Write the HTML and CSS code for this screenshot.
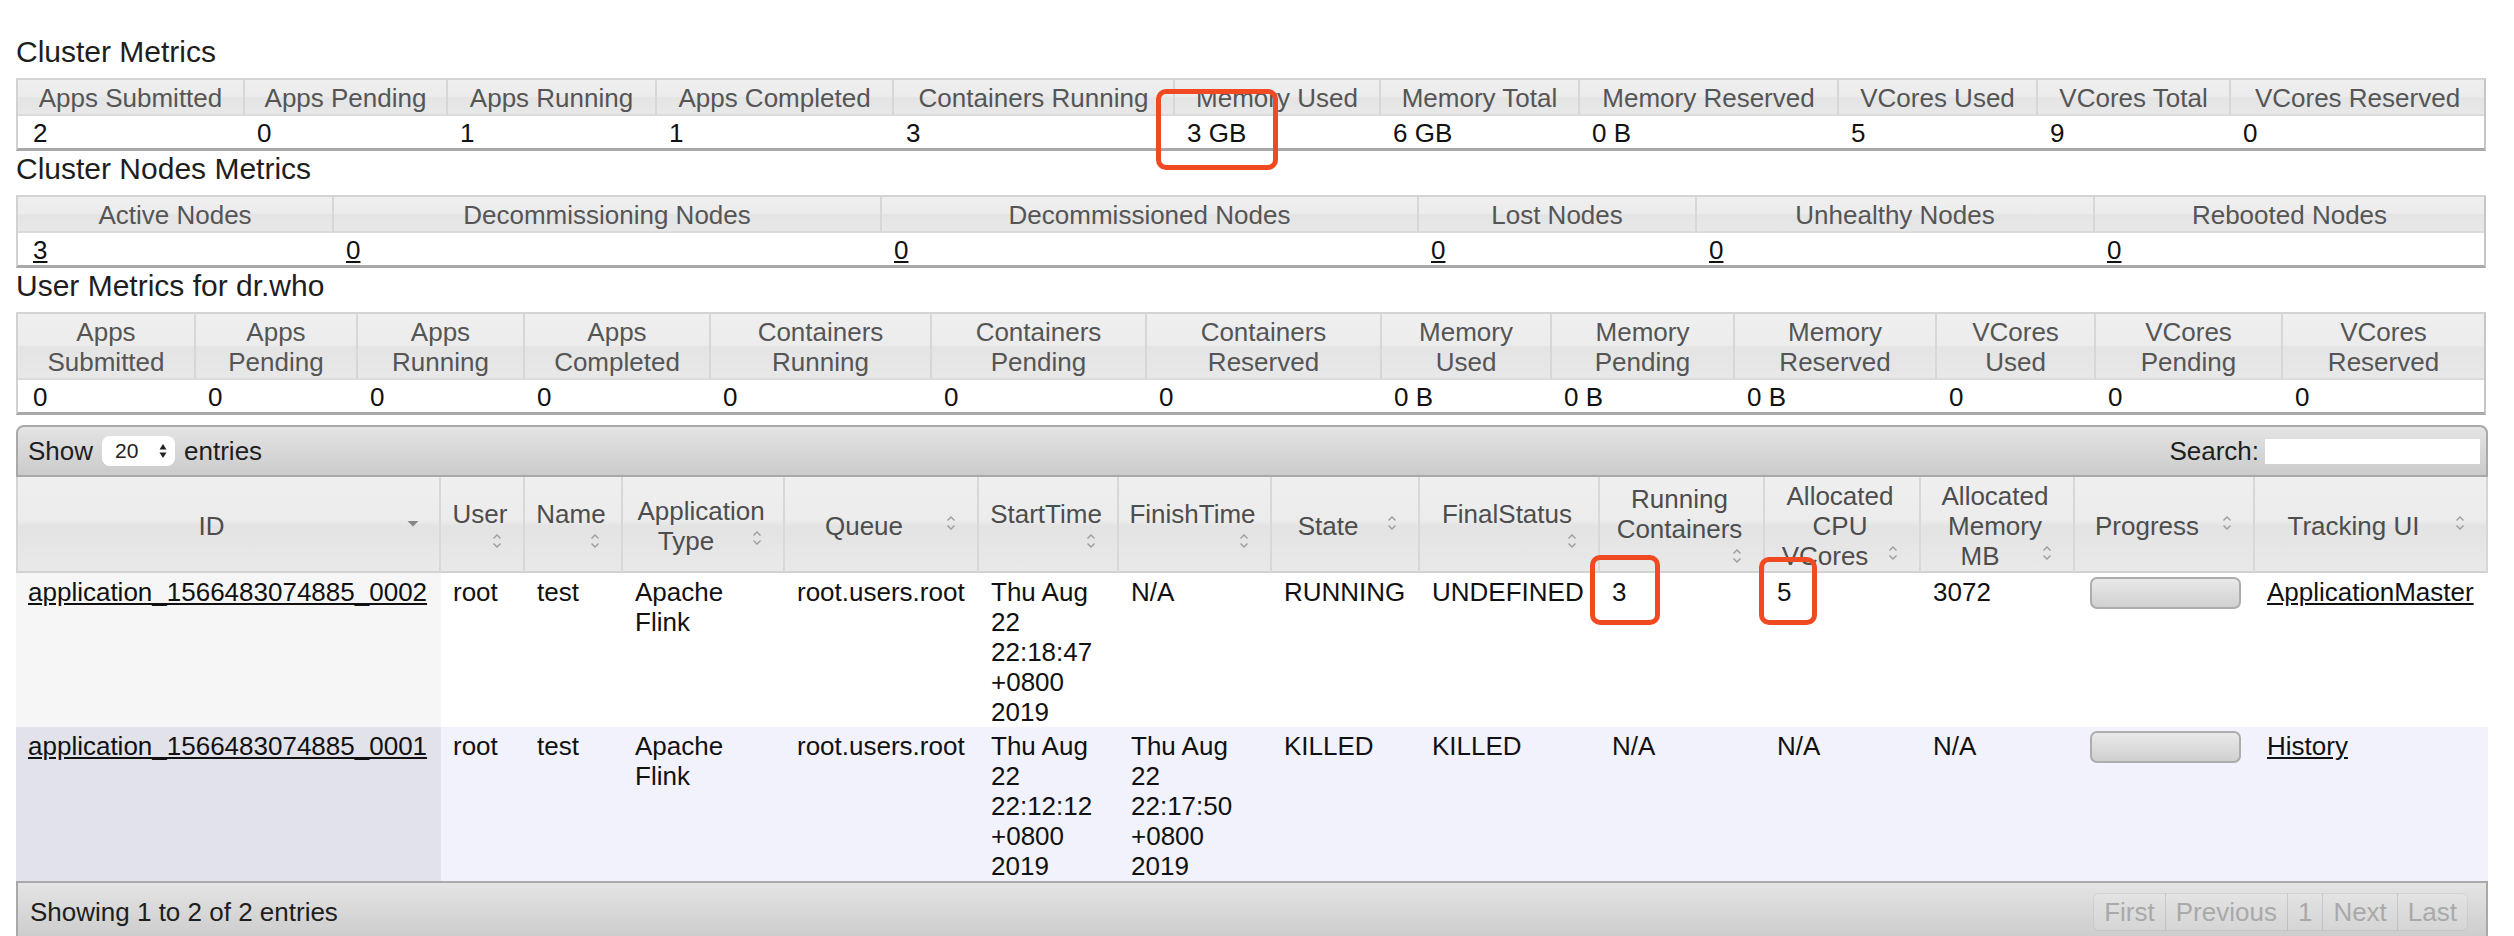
FILE: index.html
```html
<!DOCTYPE html>
<html>
<head>
<meta charset="utf-8">
<title>All Applications</title>
<link rel="stylesheet" href="styles.css">
</head>
<body>
<div class="page">
  <h3 class="title">Cluster Metrics</h3>
  <table class="metrics">
    <colgroup>
      <col class="cm1"><col class="cm2"><col class="cm3"><col class="cm4"><col class="cm5"><col class="cm6"><col class="cm7"><col class="cm8"><col class="cm9"><col class="cm10"><col>
    </colgroup>
    <thead>
      <tr><th>Apps Submitted</th><th>Apps Pending</th><th>Apps Running</th><th>Apps Completed</th><th>Containers Running</th><th>Memory Used</th><th>Memory Total</th><th>Memory Reserved</th><th>VCores Used</th><th>VCores Total</th><th>VCores Reserved</th></tr>
    </thead>
    <tbody>
      <tr><td>2</td><td>0</td><td>1</td><td>1</td><td>3</td><td>3 GB</td><td>6 GB</td><td>0 B</td><td>5</td><td>9</td><td>0</td></tr>
    </tbody>
  </table>

  <h3 class="title">Cluster Nodes Metrics</h3>
  <table class="metrics">
    <colgroup>
      <col class="cn1"><col class="cn2"><col class="cn3"><col class="cn4"><col class="cn5"><col>
    </colgroup>
    <thead>
      <tr><th>Active Nodes</th><th>Decommissioning Nodes</th><th>Decommissioned Nodes</th><th>Lost Nodes</th><th>Unhealthy Nodes</th><th>Rebooted Nodes</th></tr>
    </thead>
    <tbody>
      <tr><td><a href="#">3</a></td><td><a href="#">0</a></td><td><a href="#">0</a></td><td><a href="#">0</a></td><td><a href="#">0</a></td><td><a href="#">0</a></td></tr>
    </tbody>
  </table>

  <h3 class="title">User Metrics for dr.who</h3>
  <table class="metrics">
    <colgroup>
      <col class="um1"><col class="um2"><col class="um3"><col class="um4"><col class="um5"><col class="um6"><col class="um7"><col class="um8"><col class="um9"><col class="um10"><col class="um11"><col class="um12"><col>
    </colgroup>
    <thead>
      <tr><th>Apps Submitted</th><th>Apps Pending</th><th>Apps Running</th><th>Apps Completed</th><th>Containers Running</th><th>Containers Pending</th><th>Containers Reserved</th><th>Memory Used</th><th>Memory Pending</th><th>Memory Reserved</th><th>VCores Used</th><th>VCores Pending</th><th>VCores Reserved</th></tr>
    </thead>
    <tbody>
      <tr><td>0</td><td>0</td><td>0</td><td>0</td><td>0</td><td>0</td><td>0</td><td>0 B</td><td>0 B</td><td>0 B</td><td>0</td><td>0</td><td>0</td></tr>
    </tbody>
  </table>

  <div class="dt">
    <div class="dt-top">
      <div class="dt-len">Show <span class="sel">20<svg class="sel-arrows" viewBox="0 0 10 20"><path d="M1.5 8.5 5 3l3.5 5.5zM1.5 11.5 5 17l3.5-5.5z"/></svg></span> entries</div>
      <div class="dt-filter">Search: <span class="search"></span></div>
    </div>
    <table class="apps">
      <colgroup>
        <col class="a1"><col class="a2"><col class="a3"><col class="a4"><col class="a5"><col class="a6"><col class="a7"><col class="a8"><col class="a9"><col class="a10"><col class="a11"><col class="a12"><col class="a13"><col>
      </colgroup>
      <thead>
        <tr>
          <th>ID<svg class="si" viewBox="0 0 24 24"><path class="tri" d="M6.5 10h11L12 15.5z"/></svg></th>
          <th>User<svg class="si" viewBox="0 0 24 24"><path class="chev" d="M8.5 9.5 12 6l3.5 3.5M8.5 14.5 12 18l3.5-3.5"/></svg></th>
          <th>Name<svg class="si" viewBox="0 0 24 24"><path class="chev" d="M8.5 9.5 12 6l3.5 3.5M8.5 14.5 12 18l3.5-3.5"/></svg></th>
          <th>Application Type<svg class="si" viewBox="0 0 24 24"><path class="chev" d="M8.5 9.5 12 6l3.5 3.5M8.5 14.5 12 18l3.5-3.5"/></svg></th>
          <th>Queue<svg class="si" viewBox="0 0 24 24"><path class="chev" d="M8.5 9.5 12 6l3.5 3.5M8.5 14.5 12 18l3.5-3.5"/></svg></th>
          <th>StartTime<svg class="si" viewBox="0 0 24 24"><path class="chev" d="M8.5 9.5 12 6l3.5 3.5M8.5 14.5 12 18l3.5-3.5"/></svg></th>
          <th>FinishTime<svg class="si" viewBox="0 0 24 24"><path class="chev" d="M8.5 9.5 12 6l3.5 3.5M8.5 14.5 12 18l3.5-3.5"/></svg></th>
          <th>State<svg class="si" viewBox="0 0 24 24"><path class="chev" d="M8.5 9.5 12 6l3.5 3.5M8.5 14.5 12 18l3.5-3.5"/></svg></th>
          <th>FinalStatus<svg class="si" viewBox="0 0 24 24"><path class="chev" d="M8.5 9.5 12 6l3.5 3.5M8.5 14.5 12 18l3.5-3.5"/></svg></th>
          <th>Running Containers<svg class="si" viewBox="0 0 24 24"><path class="chev" d="M8.5 9.5 12 6l3.5 3.5M8.5 14.5 12 18l3.5-3.5"/></svg></th>
          <th>Allocated CPU VCores<svg class="si" viewBox="0 0 24 24"><path class="chev" d="M8.5 9.5 12 6l3.5 3.5M8.5 14.5 12 18l3.5-3.5"/></svg></th>
          <th>Allocated Memory MB<svg class="si" viewBox="0 0 24 24"><path class="chev" d="M8.5 9.5 12 6l3.5 3.5M8.5 14.5 12 18l3.5-3.5"/></svg></th>
          <th>Progress<svg class="si" viewBox="0 0 24 24"><path class="chev" d="M8.5 9.5 12 6l3.5 3.5M8.5 14.5 12 18l3.5-3.5"/></svg></th>
          <th>Tracking UI<svg class="si" viewBox="0 0 24 24"><path class="chev" d="M8.5 9.5 12 6l3.5 3.5M8.5 14.5 12 18l3.5-3.5"/></svg></th>
        </tr>
      </thead>
      <tbody>
        <tr class="odd">
          <td class="sorted"><a href="#">application_1566483074885_0002</a></td>
          <td>root</td>
          <td>test</td>
          <td>Apache Flink</td>
          <td>root.users.root</td>
          <td>Thu Aug 22 22:18:47 +0800 2019</td>
          <td>N/A</td>
          <td>RUNNING</td>
          <td>UNDEFINED</td>
          <td>3</td>
          <td>5</td>
          <td>3072</td>
          <td><div class="pbar"></div></td>
          <td><a href="#">ApplicationMaster</a></td>
        </tr>
        <tr class="even">
          <td class="sorted"><a href="#">application_1566483074885_0001</a></td>
          <td>root</td>
          <td>test</td>
          <td>Apache Flink</td>
          <td>root.users.root</td>
          <td>Thu Aug 22 22:12:12 +0800 2019</td>
          <td>Thu Aug 22 22:17:50 +0800 2019</td>
          <td>KILLED</td>
          <td>KILLED</td>
          <td>N/A</td>
          <td>N/A</td>
          <td>N/A</td>
          <td><div class="pbar"></div></td>
          <td><a href="#">History</a></td>
        </tr>
      </tbody>
    </table>
    <div class="dt-bot">
      <div class="dt-info">Showing 1 to 2 of 2 entries</div>
      <div class="pager">
        <span class="pg">First</span><span class="pg">Previous</span><span class="pg">1</span><span class="pg">Next</span><span class="pg">Last</span>
      </div>
    </div>
  </div>

  <div class="mark mark-mem"></div>
  <div class="mark mark-cont"></div>
  <div class="mark mark-cpu"></div>
</div>
</body>
</html>
```

FILE: styles.css
```css
* { box-sizing: border-box; }

html, body {
  margin: 0;
  padding: 0;
  background: #ffffff;
}

body {
  font-family: "Liberation Sans", Arial, Helvetica, sans-serif;
  color: #222222;
  overflow: hidden;
}

.page {
  position: relative;
  width: 2514px;
  padding: 34px 28px 0 16px;
}

.title {
  margin: 0 0 8px;
  font-size: 30px;
  line-height: 36px;
  font-weight: normal;
  color: #1e1e1e;
}

a {
  color: #111111;
  text-decoration: underline;
}

/* ---------- metrics tables ---------- */
.metrics {
  width: 100%;
  table-layout: fixed;
  border-collapse: separate;
  border-spacing: 0;
  font-size: 26px;
  line-height: 30px;
  border-top: 2px solid #d4d4d4;
  border-left: 2px solid #d2d2d2;
  border-right: 2px solid #c6c6c6;
  border-bottom: 3px solid #a9a9a9;
}

.metrics th {
  font-weight: normal;
  color: #555555;
  text-align: center;
  vertical-align: middle;
  padding: 3px 10px 1px;
  background: linear-gradient(#efefef 0%, #ececec 48%, #e4e4e4 52%, #e8e8e8 100%);
  border-right: 2px solid #d7d7d7;
  border-bottom: 2px solid #dcdcdc;
}

.metrics th:last-child { border-right: 0; }

.metrics td {
  padding: 2px 12px 0;
  color: #111111;
  text-align: left;
  vertical-align: middle;
  background: #ffffff;
}

.metrics td:first-child { padding-left: 15px; }

.cm1 { width: 227px; }
.cm2 { width: 203px; }
.cm3 { width: 209px; }
.cm4 { width: 237px; }
.cm5 { width: 281px; }
.cm6 { width: 206px; }
.cm7 { width: 199px; }
.cm8 { width: 259px; }
.cm9 { width: 199px; }
.cm10 { width: 193px; }

.cn1 { width: 316px; }
.cn2 { width: 548px; }
.cn3 { width: 537px; }
.cn4 { width: 278px; }
.cn5 { width: 398px; }

.um1 { width: 178px; }
.um2 { width: 162px; }
.um3 { width: 167px; }
.um4 { width: 186px; }
.um5 { width: 221px; }
.um6 { width: 215px; }
.um7 { width: 235px; }
.um8 { width: 170px; }
.um9 { width: 183px; }
.um10 { width: 202px; }
.um11 { width: 159px; }
.um12 { width: 187px; }

/* ---------- data table ---------- */
.dt {
  margin-top: 10px;
  width: 2472px;
}

.dt-top,
.dt-bot {
  display: flex;
  justify-content: space-between;
  align-items: center;
  font-size: 26px;
  line-height: 30px;
  color: #1e1e1e;
  border: 2px solid #a9a9a9;
  background: linear-gradient(#e4e4e4, #cbcbcb);
}

.dt-top {
  height: 52px;
  padding: 0 6px 0 10px;
  border-radius: 8px 8px 0 0;
}

.dt-len,
.dt-filter {
  display: flex;
  align-items: center;
}

.sel {
  display: inline-flex;
  align-items: center;
  justify-content: space-between;
  width: 73px;
  height: 30px;
  margin: 0 9px;
  padding: 0 7px 0 13px;
  background: #ffffff;
  border-radius: 8px;
  font-size: 21px;
  color: #222222;
}

.sel-arrows {
  width: 10px;
  height: 20px;
  fill: #222222;
}

.search {
  display: inline-block;
  width: 215px;
  height: 25px;
  margin-left: 6px;
  background: #ffffff;
}

.apps {
  width: 100%;
  table-layout: fixed;
  border-collapse: separate;
  border-spacing: 0;
  font-size: 26px;
  line-height: 30px;
}

.a1 { width: 425px; }
.a2 { width: 84px; }
.a3 { width: 98px; }
.a4 { width: 162px; }
.a5 { width: 194px; }
.a6 { width: 140px; }
.a7 { width: 153px; }
.a8 { width: 148px; }
.a9 { width: 180px; }
.a10 { width: 165px; }
.a11 { width: 156px; }
.a12 { width: 154px; }
.a13 { width: 180px; }

.apps th {
  font-weight: normal;
  color: #4d4d4d;
  text-align: center;
  vertical-align: middle;
  padding: 4px 14px 0 10px;
  background: linear-gradient(#efefef 0%, #ececec 46%, #e3e3e3 52%, #e9e9e9 100%);
  border-right: 2px solid #d8d8d8;
  border-bottom: 2px solid #d2d2d2;
}

.apps th:first-child { border-left: 2px solid #d6d6d6; }
.apps th:last-child { border-right: 2px solid #d6d6d6; }

.si {
  float: right;
  width: 24px;
  height: 24px;
  margin-left: 6px;
}

.chev {
  fill: none;
  stroke: #9c9c9c;
  stroke-width: 1.4;
}

.tri { fill: #878787; }

.apps td {
  padding: 4px 12px 0;
  vertical-align: top;
  color: #111111;
  text-align: left;
}

.apps tr.odd td { background: #ffffff; }
.apps tr.odd td.sorted { background: #f6f6f6; }
.apps tr.even td { background: #f2f2fc; }
.apps tr.even td.sorted { background: #e2e2ea; }

.pbar {
  width: 151px;
  height: 32px;
  margin: 0 0 0 3px;
  border: 2px solid #adadad;
  border-radius: 7px;
  background: linear-gradient(#e9e9e9, #d0d0d0);
}

.dt-bot {
  padding: 10px 18px 10px 12px;
  border-radius: 0 0 8px 8px;
}

.pager { display: flex; }

.pg {
  padding: 3px 10px;
  border: 1px solid rgba(0, 0, 0, 0.07);
  margin-left: -1px;
  color: #a9a9a9;
  background: rgba(255, 255, 255, 0.12);
}

.pg:first-child { border-radius: 6px 0 0 6px; }
.pg:last-child { border-radius: 0 6px 6px 0; }

/* ---------- annotation boxes ---------- */
.mark {
  position: absolute;
  border: 5px solid #f14a23;
  border-radius: 10px;
}

.mark-mem { left: 1156px; top: 89px; width: 122px; height: 81px; }
.mark-cont { left: 1590px; top: 555px; width: 70px; height: 70px; }
.mark-cpu { left: 1759px; top: 557px; width: 58px; height: 68px; }
```
